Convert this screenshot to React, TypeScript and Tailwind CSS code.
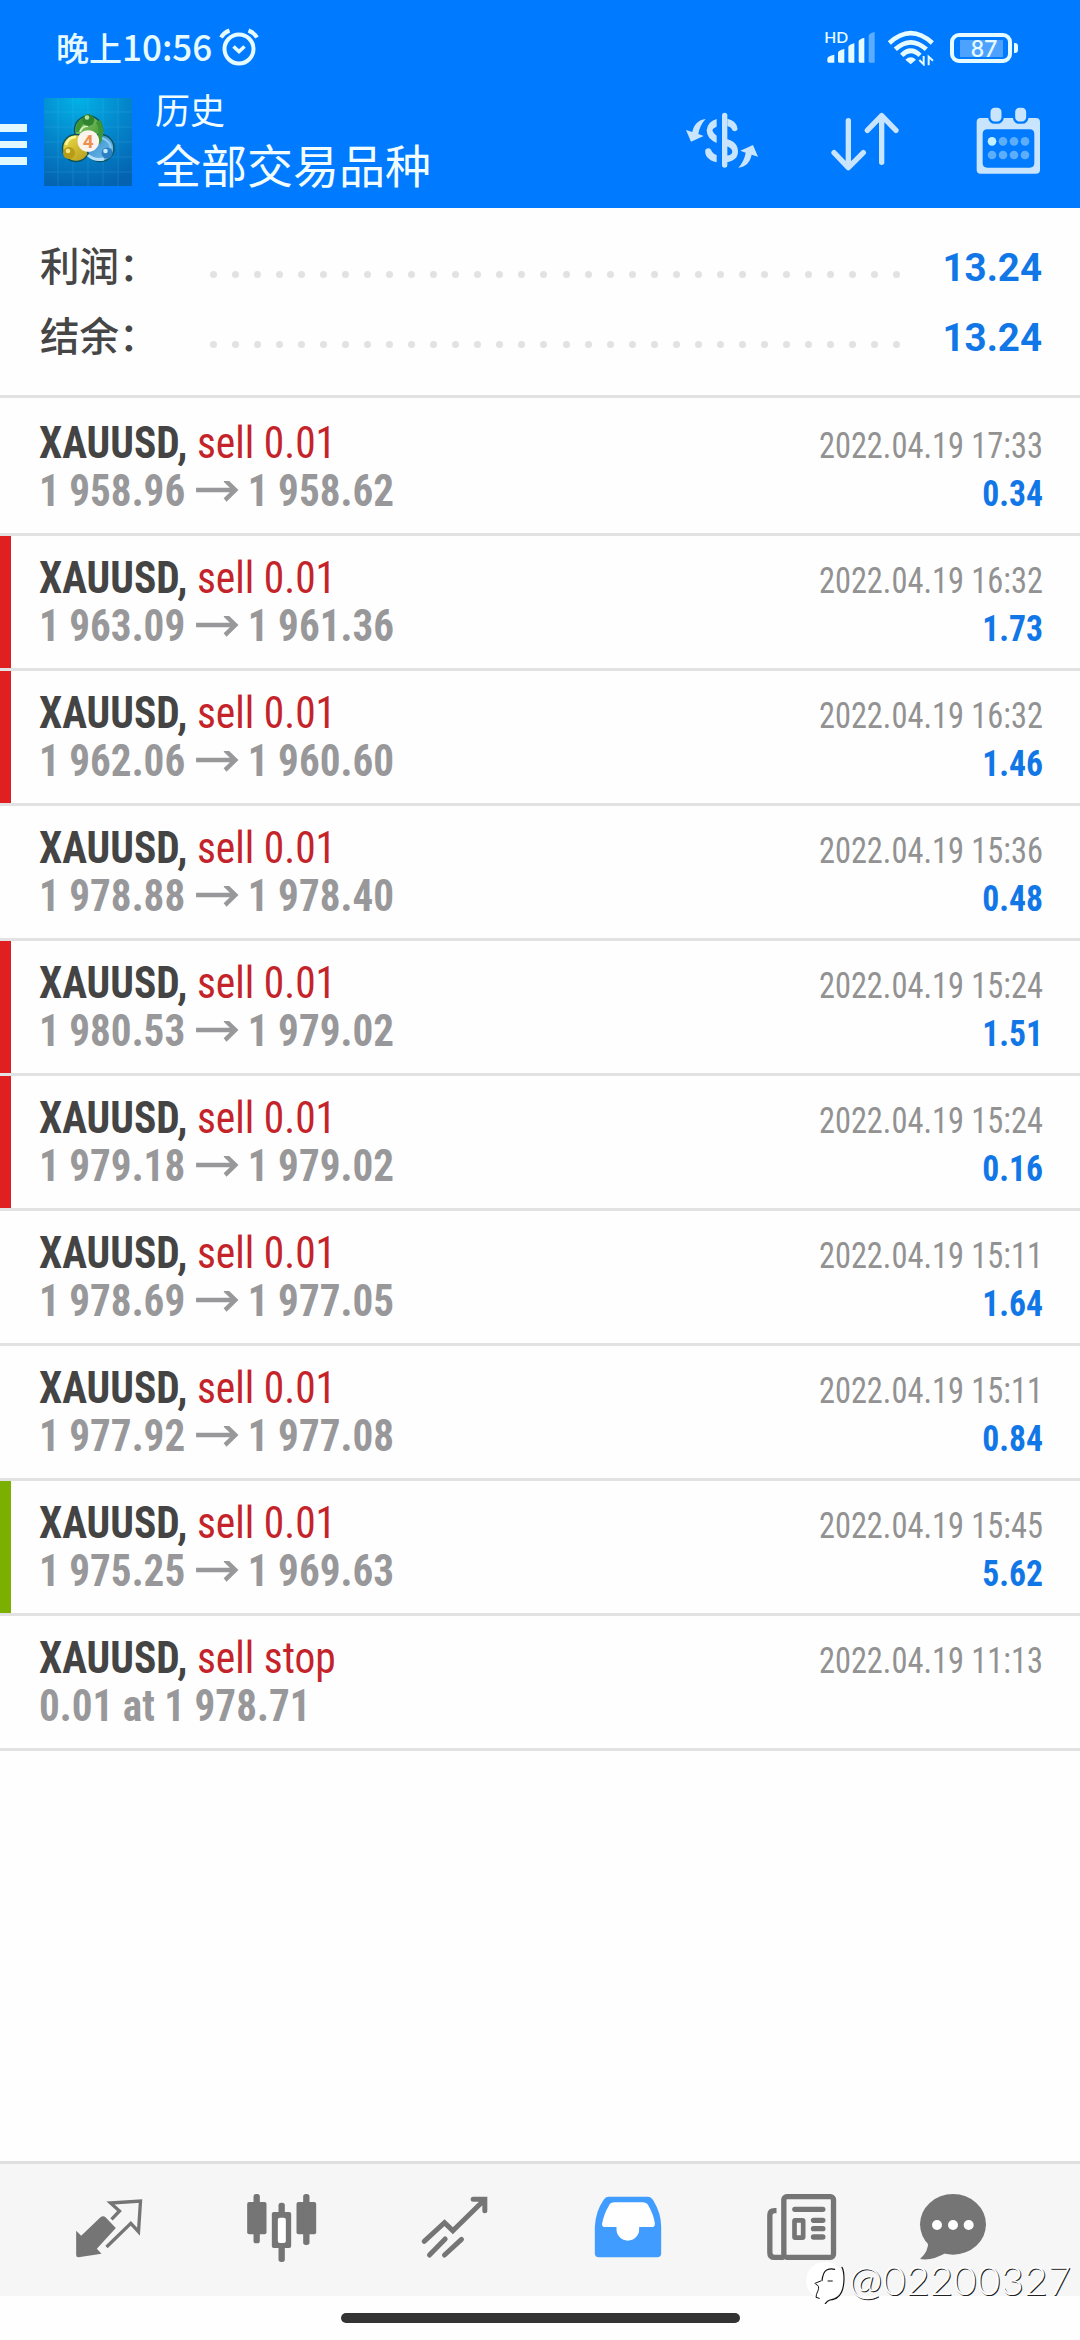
import React from "react";

type Deal = {
  side: string;
  detail: [string, string?];
  time: string;
  profit?: string;
  mark?: "sl" | "tp";
};

const deals: Deal[] = [
  { side: "sell 0.01", detail: ["1 958.96", "1 958.62"], time: "2022.04.19 17:33", profit: "0.34" },
  { side: "sell 0.01", detail: ["1 963.09", "1 961.36"], time: "2022.04.19 16:32", profit: "1.73", mark: "sl" },
  { side: "sell 0.01", detail: ["1 962.06", "1 960.60"], time: "2022.04.19 16:32", profit: "1.46", mark: "sl" },
  { side: "sell 0.01", detail: ["1 978.88", "1 978.40"], time: "2022.04.19 15:36", profit: "0.48" },
  { side: "sell 0.01", detail: ["1 980.53", "1 979.02"], time: "2022.04.19 15:24", profit: "1.51", mark: "sl" },
  { side: "sell 0.01", detail: ["1 979.18", "1 979.02"], time: "2022.04.19 15:24", profit: "0.16", mark: "sl" },
  { side: "sell 0.01", detail: ["1 978.69", "1 977.05"], time: "2022.04.19 15:11", profit: "1.64" },
  { side: "sell 0.01", detail: ["1 977.92", "1 977.08"], time: "2022.04.19 15:11", profit: "0.84" },
  { side: "sell 0.01", detail: ["1 975.25", "1 969.63"], time: "2022.04.19 15:45", profit: "5.62", mark: "tp" },
  { side: "sell stop", detail: ["0.01 at 1 978.71"], time: "2022.04.19 11:13" },
];

const totals = [
  { label: "利润：", value: "13.24" },
  { label: "结余：", value: "13.24" },
];

const StatusBar = () => (
  <div className="flex h-[96px] items-center pl-[56px] pr-[62px] text-[#e6fbff]">
    <span className="-mt-[3px] font-['Noto_Sans_CJK_SC',sans-serif] text-[33px] leading-[40px] font-medium">
      晚上<span className="text-[35px]">10:56</span>
    </span>
    <svg className="ml-[7px] h-[40px] w-[40px]" viewBox="0 0 40 40" fill="none" stroke="currentColor" strokeWidth="4">
      <circle cx="20" cy="21" r="14.5" />
      <path d="M2 9.5Q5 4.5 10.5 2.5M38 9.5Q35 4.5 29.5 2.5" />
      <path d="M14.5 18.5L20 23.5L25.5 18.5" strokeWidth="3.6" />
    </svg>

    <div className="ml-auto flex items-center">
      <svg className="h-[48px] w-[52px]" viewBox="552 72 156 144" fill="currentColor">
        <text x="553" y="130" fontSize="47" fontWeight="600" fontFamily="Lato, sans-serif">HD</text>
        <path d="M562 176Q562 168 583 164V188H566Q562 188 562 184ZM594 158Q594 152 613 147V188H598Q594 188 594 184ZM625 141Q625 135 643 130V188H629Q625 188 625 184ZM656 124Q656 118 673 113V188H660Q656 188 656 184Z" />
        <path d="M686 107Q686 101 704 96V188H690Q686 188 686 184Z" opacity=".4" />
      </svg>
      <svg className="ml-[11px] h-[36px] w-[48px]" viewBox="741 90 144 108" fill="none" stroke="currentColor" strokeWidth="14">
        <path d="M748 129Q812 70 877 129" />
        <path d="M766 148Q812 106 859 148" />
        <path d="M785 166Q812 139 840 166" />
        <path d="M796 179Q812 165 828 179L812 193Z" fill="currentColor" stroke="none" />
        <path d="M851 168V193L838 180M866 196V170L879 182" strokeWidth="6" />
      </svg>
      <div className="ml-[15px] flex h-[30px] w-[62px] items-center justify-center rounded-[9px] border-4 border-current">
        <div className="flex h-[17px] w-[43px] items-center justify-center bg-white/30 font-['Lato',sans-serif] text-[23px] leading-[17px] font-semibold">
          <span className="ml-[6px]">87</span>
        </div>
      </div>
      <div className="ml-[2px] h-[10px] w-[4px] rounded-r-[3px] bg-current" />
    </div>
  </div>
);

const AppLogo = () => (
  <svg className="h-[88px] w-[88px]" viewBox="0 0 88 88">
    <defs>
      <radialGradient id="sky" cx=".4" cy="0" r="1.05">
        <stop offset="0" stopColor="#02b2e6" />
        <stop offset=".5" stopColor="#0487cc" />
        <stop offset="1" stopColor="#0462b0" />
      </radialGradient>
      <linearGradient id="green" x1="0" y1="0" x2="1" y2="1">
        <stop offset="0" stopColor="#9ccf72" />
        <stop offset="1" stopColor="#2f8d29" />
      </linearGradient>
      <linearGradient id="gold" x1="0" y1="0" x2="1" y2="1">
        <stop offset="0" stopColor="#efe04a" />
        <stop offset="1" stopColor="#b3971a" />
      </linearGradient>
      <linearGradient id="blue" x1="0" y1="0" x2="1" y2="1">
        <stop offset="0" stopColor="#2b86c8" />
        <stop offset="1" stopColor="#7cc4ee" />
      </linearGradient>
    </defs>
    <rect width="88" height="88" fill="url(#sky)" />
    <path d="M14 0V88M29 0V88M44 0V88M59 0V88M74 0V88M0 14H88M0 29H88M0 44H88M0 59H88M0 74H88" stroke="#5fd0ff" strokeWidth="1" opacity=".16" />
    <g stroke="#0b5560" strokeWidth="1.5">
      <circle cx="44.500" cy="32" r="14" fill="url(#green)" />
      <circle cx="32" cy="50" r="13.500" fill="url(#gold)" />
      <circle cx="56.500" cy="50" r="13.500" fill="url(#blue)" />
    </g>
    <path d="M34 34Q34 23 44 21M54 23Q60 33 54 45" fill="none" stroke="#3d9636" strokeWidth="5" />
    <path d="M36 34Q38 28 44 28" fill="none" stroke="#d3efc0" strokeWidth="2" />
    <path d="M22 47Q24 39 32 39" fill="none" stroke="#fbf59b" strokeWidth="2.5" />
    <path d="M44 57Q50 63 60 61" fill="none" stroke="#b5e0f8" strokeWidth="3" />
    <path d="M58 40Q66 43 67 50" fill="none" stroke="#8accf2" strokeWidth="2" />
    <circle cx="44.300" cy="22" r="6" fill="#2f8430" />
    <circle cx="43" cy="19.500" r="2.300" fill="#b5dfa2" />
    <circle cx="25" cy="55" r="6" fill="#b89c16" />
    <circle cx="24" cy="53" r="2.300" fill="#f4e884" />
    <circle cx="63" cy="55" r="5.500" fill="#2b80c4" />
    <circle cx="61.500" cy="53" r="2.300" fill="#c6eaff" />
    <circle cx="44.300" cy="43" r="10.800" fill="#fbf3ee" />
    <text x="44.300" y="49.700" textAnchor="middle" fontSize="19" fontWeight="700" fontFamily="Roboto, sans-serif" fill="#ef8f4c">4</text>
  </svg>
);

const TitleBar = () => (
  <div className="flex h-[112px] items-start text-[#f2fdff]">
    <div className="mt-[28px] flex w-[27px] flex-col gap-[9px]">
      <div className="h-[7.500px] bg-[#e2f8ff]" />
      <div className="h-[7.500px] bg-[#e2f8ff]" />
      <div className="h-[7.500px] bg-[#e2f8ff]" />
    </div>
    <div className="mt-[2px] ml-[17px]">
      <AppLogo />
    </div>
    <div className="-mt-[7px] ml-[23px] font-['Noto_Sans_CJK_SC',sans-serif]">
      <div className="text-[35px] leading-[40px]">历史</div>
      <div className="mt-[4px] text-[46px] leading-[60px]">全部交易品种</div>
    </div>

    <div className="mt-[8px] mr-[34px] ml-auto flex text-[#c9e4fd]">
      <svg className="h-[76px] w-[80px]" viewBox="126 312 240 228" fill="currentColor">
        <rect x="246" y="338" width="16" height="165" rx="8" />
        <path d="M197 357C175 360 162 372 157 396L138 390L153 425L191 408L175 402C178 385 185 370 197 357Z" />
        <path d="M295 503C317 500 330 488 335 464L354 470L339 435L301 452L317 458C314 475 307 490 295 503Z" />
        <path d="M230 357V380Q219 384 217 391Q219 400 230 407V429Q200 416 200 391Q202 365 230 357Z" />
        <path d="M230 487V465Q217 461 213 449Q206 441 196 449Q192 477 230 487Z" />
        <path d="M262 356Q291 362 293 387Q288 398 277 391Q274 381 262 378Z" />
        <path d="M256 416Q294 424 294 455Q293 483 256 487V466Q275 468 277 456Q276 442 256 438Z" />
      </svg>
      <svg className="ml-[65px] h-[76px] w-[76px]" viewBox="561 312 228 228" fill="none" stroke="currentColor" strokeWidth="16" strokeLinecap="round" strokeLinejoin="round">
        <path d="M625 362V500M582 458L625 503L670 458M725 487V347M682 391L725 347L768 391" />
      </svg>
      <svg className="ml-[67px] h-[76px] w-[76px]" viewBox="990 312 228 228" fill="currentColor">
        <path fillRule="evenodd" d="M1022 354H1188Q1200 354 1200 366V510Q1200 521 1188 521H1022Q1010 521 1010 510V366Q1010 354 1022 354ZM1042 388Q1028 388 1028 402V489Q1028 503 1042 503H1169Q1183 503 1183 489V402Q1183 388 1169 388Z" />
        <rect x="1048" y="320" width="40" height="48" rx="16" stroke="#007aff" strokeWidth="7" />
        <rect x="1122" y="320" width="40" height="48" rx="16" stroke="#007aff" strokeWidth="7" />
        <circle cx="1056" cy="424" r="13" fill="#c3f0ff" />
        <g fill="#5caefb">
          <circle cx="1089" cy="424" r="13" />
          <circle cx="1122" cy="424" r="13" />
          <circle cx="1155" cy="424" r="13" />
          <circle cx="1056" cy="465" r="13" />
          <circle cx="1089" cy="465" r="13" />
          <circle cx="1122" cy="465" r="13" />
          <circle cx="1155" cy="465" r="13" />
        </g>
      </svg>
    </div>
  </div>
);

const Summary = () => (
  <div className="h-[190px] border-b-[3px] border-[#e2e2e2] pt-[22px]">
    {totals.map((row) => (
      <div key={row.label} className="flex h-[70px] items-center pr-[38px] pl-[40px]">
        <span className="-mt-[3px] w-[170px] font-['Noto_Sans_CJK_SC',sans-serif] text-[39.500px] leading-[60px] font-medium text-[#464646]">
          {row.label}
        </span>
        <div className="mt-[19px] flex w-[690px] justify-between">
          {Array.from({ length: 32 }, (_, i) => (
            <span key={i} className="h-[7px] w-[7px] rounded-full bg-[#e2e2e2]" />
          ))}
        </div>
        <span className="mt-[5px] ml-auto font-['Roboto',sans-serif] text-[38.500px] leading-[60px] font-bold text-[#1277e6]">
          {row.value}
        </span>
      </div>
    ))}
  </div>
);

const DealRow = ({ deal }: { deal: Deal }) => (
  <div className="flex h-[135px] border-b-[3px] border-[#e2e2e2]">
    <div className={`w-[11px] ${deal.mark === "sl" ? "bg-[#e02020]" : deal.mark === "tp" ? "bg-[#7cb000]" : ""}`} />
    <div className="flex-1 pt-[18px] pr-[37px] pl-[28px] font-['Roboto_Condensed','Roboto',sans-serif] text-[44px] leading-[48px] [font-stretch:75%]">
      <div className="flex h-[48px] items-baseline justify-between">
        <div className="origin-left scale-x-[0.942] text-[#c4232a]">
          <span className="font-bold text-[#444]">XAUUSD,</span> {deal.side}
        </div>
        <div className="origin-right scale-x-[0.9] text-[36px] text-[#929292]">{deal.time}</div>
      </div>
      <div className="flex h-[48px] items-baseline justify-between font-bold">
        <div className="flex origin-left scale-x-[0.935] items-baseline text-[#98989a]">
          <span>{deal.detail[0]}</span>
          {deal.detail[1] && (
            <>
              <svg className="mr-[9px] ml-[12px] h-[25px] w-[46px]" viewBox="0 0 46 25" fill="none" stroke="currentColor" strokeWidth="4.5">
                <path d="M0 9H43M31 -1L42 9L31 19" />
              </svg>
              <span>{deal.detail[1]}</span>
            </>
          )}
        </div>
        <div className="origin-right scale-x-[0.935] text-[36px] text-[#1277e6]">{deal.profit}</div>
      </div>
    </div>
  </div>
);

const BottomNav = () => (
  <div className="flex h-[135px] items-center border-t-[3px] border-[#e0e0e0] bg-[#f6f6f6] pl-[22px] text-[#757575]">
    <div className="flex w-[173px] justify-center">
      <svg className="h-[80px] w-[80px]" viewBox="205.500 150 240 240" fill="currentColor">
        <path d="M227 272L242 287L300 232Q308 225 315 232L346 264L289 326L303 341L234 352Q227 352 227 345Z" />
        <path d="M333 238L357 213L330 189L420 183L414 275L391 250L318 321" fill="none" stroke="currentColor" strokeWidth="10" />
      </svg>
    </div>
    <div className="flex w-[173px] justify-center">
      <svg className="h-[80px] w-[80px]" viewBox="724.500 150 240 240" fill="currentColor">
        <rect x="740" y="186" width="58" height="97" rx="6" />
        <rect x="759" y="162" width="19" height="148" rx="8" />
        <rect x="888" y="186" width="59" height="97" rx="6" />
        <rect x="908" y="162" width="19" height="153" rx="8" />
        <rect x="834" y="188" width="19" height="178" rx="8" />
        <rect x="814" y="216" width="58" height="108" rx="6" />
        <rect x="832" y="233" width="24" height="76" rx="6" fill="#fff" />
      </svg>
    </div>
    <div className="flex w-[173px] justify-center">
      <svg className="h-[80px] w-[80px]" viewBox="163.500 150 240 240" fill="none" stroke="currentColor" strokeWidth="15" strokeLinecap="round">
        <path d="M191 304L252 248L277 272L372 179M338 178H373V212M207 345L254 297M252 345L303 298" />
      </svg>
    </div>
    <div className="flex w-[173px] justify-center text-[#419cff]">
      <svg className="h-[80px] w-[80px]" viewBox="682.500 150 240 240" fill="currentColor">
        <path d="M745 170H862Q872 170 879 182Q902 220 902 260V340Q902 352 890 352H715Q703 352 703 340V260Q705 215 729 180Q735 170 745 170Z" />
        <path d="M762 187H846Q858 187 864 197Q880 225 883 250Q884 261 876 261H836V268A34 34 0 0 1 768 268V261H732Q723 261 725 250Q730 222 745 197Q750 187 762 187Z" fill="#fff" />
      </svg>
    </div>
    <div className="flex w-[173px] justify-center">
      <svg className="h-[80px] w-[80px]" viewBox="121.500 150 240 240" fill="none" stroke="currentColor" strokeWidth="16" strokeLinecap="round">
        <rect x="190" y="170" width="149" height="182" rx="9" />
        <path d="M168 212H162Q148 212 148 226V338Q148 352 162 352H190" strokeLinecap="butt" />
        <path d="M223 208H307M279 241H307M279 266H307M279 291H307" />
        <rect x="222" y="241" width="26" height="52" strokeWidth="14" rx="2" />
      </svg>
    </div>
    <div className="flex w-[132px] justify-center">
      <svg className="h-[80px] w-[80px]" viewBox="579 150 240 240" fill="currentColor">
        <ellipse cx="699" cy="253" rx="99" ry="91" />
        <path d="M624 305Q627 332 600 357Q636 364 682 336Z" />
        <g fill="#fff">
          <circle cx="651" cy="255" r="15" />
          <circle cx="699" cy="255" r="15" />
          <circle cx="746" cy="255" r="15" />
        </g>
      </svg>
    </div>
  </div>
);

const Watermark = () => (
  <div className="absolute top-[2256px] left-[804px] flex items-center text-white">
    <svg className="h-[48px] w-[42px]" viewBox="12 18 126 144" fill="none" stroke="#111" strokeWidth="3.500" strokeLinecap="round" strokeLinejoin="round">
      <circle cx="75" cy="92" r="57" fill="#fff" stroke="none" />
      <path d="M66 92Q69 66 80 60Q92 54 104 58" />
      <path d="M45 100L62 93M84 93H97" strokeWidth="3" />
      <path d="M48 103Q60 106 54 122Q48 134 48 142L58 145" strokeWidth="3" />
      <path d="M126 52Q132 62 132 88Q131 128 113 141Q106 148 90 150Q82 152 76 161" />
    </svg>
    <span className="ml-[3px] font-['Lato',sans-serif] text-[40px] leading-[48px] font-light tracking-[0.4px] [text-shadow:1px_1px_0_#222]">
      @02200327
    </span>
  </div>
);

const App = () => {
  return (
    <div className="relative flex h-[2340px] w-[1080px] flex-col overflow-hidden bg-[#fefefe]">
      <header className="bg-[#007aff]">
        <StatusBar />
        <TitleBar />
      </header>
      <Summary />
      <main className="flex-1 pt-[3px]">
        {deals.map((deal, i) => (
          <DealRow key={i} deal={deal} />
        ))}
      </main>
      <BottomNav />
      <div className="flex h-[44px] justify-center pt-[17px]">
        <div className="h-[10px] w-[399px] rounded-full bg-[#333]" />
      </div>
      <Watermark />
    </div>
  );
};

export default App;
